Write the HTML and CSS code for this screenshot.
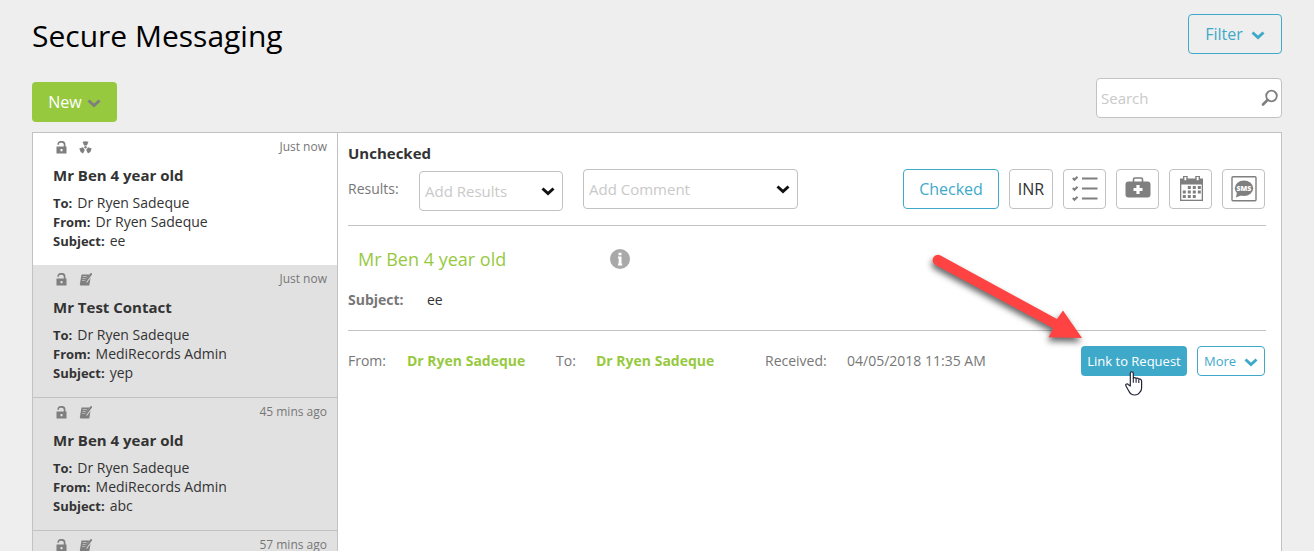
FILE: index.html
```html
<!DOCTYPE html>
<html lang="en">
<head>
<meta charset="utf-8">
<title>Secure Messaging</title>
<link rel="stylesheet" href="styles.css">
</head>
<body>
<svg class="sprite" aria-hidden="true">
  <symbol id="chevron" viewBox="0 0 14 9"><path d="M1.500 1.500 7 6.500 12.500 1.500" fill="none" stroke="currentColor" stroke-width="3"/></symbol>
  <symbol id="unlock" viewBox="0 0 13 13"><path d="M3.200 3.800V3.500q0-2.700 3.200-2.700t3.200 2.700V6" fill="none" stroke="currentColor" stroke-width="1.700"/><path fill="currentColor" fill-rule="evenodd" d="M1.500 5.500h10v7h-10zM5.500 8v2.200h2V8z"/></symbol>
  <symbol id="radiology" viewBox="0 0 13 13"><g fill="currentColor"><circle cx="6.500" cy="6.300" r="1.200"/><path d="M3.500.8Q6.500-.2 9.500.8L7.900 4.600H5.100zM.3 7.500 4 6.200 5.800 9 4 12.500Q.8 11 .3 7.500zM12.700 7.500 9 6.200 7.200 9 9 12.500q3.200-1.500 3.700-5z"/></g></symbol>
  <symbol id="note" viewBox="0 0 13 13"><path d="M2.500 1.500H12L10.300 12.500H1.500L.8 11.500z" fill="currentColor"/><path d="M3.800 3.500h4M3.500 5.500h3M3.200 7.500h2.500" stroke="var(--surface)" stroke-width=".6"/><path d="M12.800 1 6.800 9" stroke="var(--surface)" stroke-width="2.800"/><path d="M12.700.3 7.200 7.800 6 9.500" stroke="currentColor" stroke-width="1.900"/></symbol>
</svg>

<header class="page-header">
  <h1 class="page-title">Secure Messaging</h1>
  <button class="btn btn-outline btn-filter" type="button">Filter <svg class="chevron"><use href="#chevron"/></svg></button>
</header>
<div class="page-tools">
  <button class="btn btn-new" type="button">New <svg class="chevron"><use href="#chevron"/></svg></button>
  <div class="search">
    <input class="search-input" type="search" placeholder="Search" aria-label="Search">
    <svg class="search-icon" viewBox="0 0 18 18"><circle cx="10.500" cy="7" r="5.300" fill="none" stroke="#7f7f7f" stroke-width="1.800"/><path d="M6.500 11 2 15.500" stroke="#7f7f7f" stroke-width="2.600" stroke-linecap="round"/></svg>
  </div>
</div>

<main class="panel">
  <section class="list" aria-label="Messages">
    <article class="message message-active">
      <div class="message-top"><svg class="mark"><use href="#unlock"/></svg><svg class="mark"><use href="#radiology"/></svg><time class="age">Just now</time></div>
      <h2 class="message-name">Mr Ben 4 year old</h2>
      <p class="message-line"><b>To:</b> Dr Ryen Sadeque</p>
      <p class="message-line"><b>From:</b> Dr Ryen Sadeque</p>
      <p class="message-line"><b>Subject:</b> ee</p>
    </article>
    <article class="message">
      <div class="message-top"><svg class="mark"><use href="#unlock"/></svg><svg class="mark"><use href="#note"/></svg><time class="age">Just now</time></div>
      <h2 class="message-name">Mr Test Contact</h2>
      <p class="message-line"><b>To:</b> Dr Ryen Sadeque</p>
      <p class="message-line"><b>From:</b> MediRecords Admin</p>
      <p class="message-line"><b>Subject:</b> yep</p>
    </article>
    <article class="message">
      <div class="message-top"><svg class="mark"><use href="#unlock"/></svg><svg class="mark"><use href="#note"/></svg><time class="age">45 mins ago</time></div>
      <h2 class="message-name">Mr Ben 4 year old</h2>
      <p class="message-line"><b>To:</b> Dr Ryen Sadeque</p>
      <p class="message-line"><b>From:</b> MediRecords Admin</p>
      <p class="message-line"><b>Subject:</b> abc</p>
    </article>
    <article class="message">
      <div class="message-top"><svg class="mark"><use href="#unlock"/></svg><svg class="mark"><use href="#note"/></svg><time class="age">57 mins ago</time></div>
    </article>
  </section>

  <section class="detail" aria-label="Message">
    <h2 class="status">Unchecked</h2>
    <div class="toolbar">
      <label class="toolbar-label" for="results">Results:</label>
      <div class="select select-results"><select id="results"><option>Add Results</option></select><svg class="chevron"><use href="#chevron"/></svg></div>
      <div class="select select-comment"><select aria-label="Comment"><option>Add Comment</option></select><svg class="chevron"><use href="#chevron"/></svg></div>
      <div class="toolbar-actions">
        <button class="btn btn-outline btn-checked" type="button">Checked</button>
        <button class="tool tool-text" type="button">INR</button>
        <button class="tool" type="button" aria-label="Tasks"><svg viewBox="0 0 26 26"><g fill="none" stroke="#7f7f7f"><path stroke-width="2" d="M10 2.500h15.500M10 12.500h15.500M10 22.500h15.500"/><path stroke-width="2" d="M.8 2l1.700 1.800L5.500.8M.8 12l1.700 1.800 3-3M.8 22l1.700 1.800 3-3"/></g></svg></button>
        <button class="tool" type="button" aria-label="Clinical"><svg viewBox="0 0 26 26"><path d="M8.500 6V3.500q0-1.500 1.500-1.500h6q1.500 0 1.500 1.500V6" fill="none" stroke="#7f7f7f" stroke-width="1.600"/><rect x=".5" y="5.500" width="25" height="16" rx="3" fill="#7f7f7f"/><path d="M13 9v9M8.500 13.500h9" stroke="#fff" stroke-width="3.200"/></svg></button>
        <button class="tool" type="button" aria-label="Calendar"><svg viewBox="0 0 26 26"><path fill="#7f7f7f" d="M2 2.500h23V25H2z"/><path fill="#fff" d="M3.300 8.500h20.400v15.200H3.300z"/><path d="M5.700 5V.2h3.300V5zM18 5V.2h3.300V5z" fill="#fff" stroke="#7f7f7f" stroke-width="1.400"/><path d="M9.800 11.500h13M4.800 16h18M4.800 20.500h13" stroke="#7f7f7f" stroke-width="3" stroke-dasharray="3 2"/></svg></button>
        <button class="tool" type="button" aria-label="SMS"><svg viewBox="0 0 26 26"><rect x="1" y=".7" width="24" height="24" rx="1" fill="none" stroke="#7f7f7f" stroke-width="1.400"/><ellipse cx="13" cy="12.300" rx="9.200" ry="7.800" fill="#7f7f7f"/><path d="M6 16 5 21.500l6-2.500z" fill="#7f7f7f"/><text class="sms" x="13" y="15" text-anchor="middle">SMS</text></svg></button>
      </div>
    </div>

    <div class="subject-block">
      <div class="patient">
        <a class="patient-name" href="#">Mr Ben 4 year old</a>
        <svg class="info" viewBox="0 0 20 20" role="img" aria-label="Information"><circle cx="10" cy="10" r="10" fill="#a9a9a9"/><path d="M8.500 3.800h3v2.400h-3zM8 7.500h3.500v7h.7v2H8v-2h.7v-5H8z" fill="#fff"/></svg>
      </div>
      <div class="subject"><b>Subject:</b><span>ee</span></div>
    </div>

    <div class="meta">
      <span>From:</span><a class="person" href="#">Dr Ryen Sadeque</a>
      <span>To:</span><a class="person" href="#">Dr Ryen Sadeque</a>
      <span>Received:</span><time>04/05/2018 11:35 AM</time>
      <div class="meta-actions">
        <div class="link-wrap">
          <button class="btn btn-small btn-link" type="button">Link to Request</button>
          <svg class="arrow" viewBox="0 0 180 110" aria-hidden="true"><path d="M20.500 10.500 137 74l6-8.500 19 27.500-33.500-.8 4.700-9L15.500 20a5.300 5.300 0 0 1 5-9.500z" fill="#ff4343"/></svg>
          <svg class="pointer" viewBox="0 0 18 25" aria-hidden="true"><path d="M5.300 15V2.300q0-1.500 1.500-1.500t1.500 1.500V7q1.300-1 2.800.3 1.500-.6 2.500.6 3-.1 3 2.300V17q0 3-2 4.500-1.500 2.500-5 2.500-4 0-5.800-4L1 15q-.8-1.500.5-2 1-.4 2 .7z" fill="#fff" stroke="#222436" stroke-width="1.200" stroke-linejoin="round"/><path d="M8.300 7v4.800M11.100 7.500v4.300M13.800 8.500V12" stroke="#222436" stroke-width="1.100"/></svg>
        </div>
        <button class="btn btn-small btn-outline btn-more" type="button">More <svg class="chevron"><use href="#chevron"/></svg></button>
      </div>
    </div>
  </section>
</main>
</body>
</html>
```
FILE: styles.css
```css
* { box-sizing: border-box; }

body {
  --surface: #e1e1e1;
  --line: #c2c2c2;
  --blue: #3fa9c9;
  --green: #97c93f;
  display: flex;
  flex-direction: column;
  height: 100vh;
  margin: 0;
  padding: 14px 32px 0;
  overflow: hidden;
  background: #eee;
  color: #333;
  font: 14px/20px "Open Sans", "Noto Sans", sans-serif;
}

h1, h2, p { margin: 0; }
a { text-decoration: none; }
button, input, select { font: inherit; }
.sprite { position: absolute; width: 0; height: 0; }

.page-header, .page-tools { display: flex; justify-content: space-between; }
.page-header { height: 64px; align-items: flex-start; }
.page-title { color: #000; font-size: 30px; line-height: 44px; font-weight: 400; }
.page-tools { height: 54px; }

.btn {
  display: flex;
  align-items: center;
  justify-content: center;
  height: 40px;
  padding: 0 15px;
  border: 1px solid transparent;
  border-radius: 4px;
  background: none;
  font-size: 16px;
}
.btn-outline { border-color: var(--blue); color: var(--blue); }
.btn-outline .chevron { margin-left: 8px; }
.btn-filter { width: 94px; }
.btn-new { width: 85px; margin-top: 4px; background: var(--green); color: #fff; font-weight: 500; }
.btn-new .chevron { margin-left: 5px; color: #7f7f7f; }
.chevron { flex: none; width: 14px; height: 9px; margin-top: 3px; }

.search { position: relative; width: 186px; height: 40px; }
.search-input {
  width: 100%;
  height: 40px;
  padding: 0 30px 0 4px;
  border: 1px solid var(--line);
  border-radius: 4px;
  background: #fff;
  font-size: 15px;
}
.search-input::placeholder { color: #c9c9c9; }
.search-icon { position: absolute; top: 11px; right: 3px; width: 18px; height: 18px; }

.panel {
  display: flex;
  flex: 1;
  min-height: 0;
  border: 1px solid var(--line);
  border-bottom: 0;
  background: #fff;
}

.list { flex: none; width: 305px; overflow: hidden; border-right: 1px solid var(--line); }
.message {
  height: 133px;
  padding: 4px 10px 0 20px;
  border-bottom: 1px solid var(--line);
  background: var(--surface);
}
.message-active { --surface: #fff; height: 132px; border-bottom: 0; }
.message-top { display: flex; align-items: center; height: 20px; padding-left: 2px; }
.mark { width: 13px; height: 13px; margin-right: 11px; color: #7f7f7f; }
.age { margin-left: auto; color: #777; font-size: 12px; }
.message-name { margin: 8px 0; font-size: 15px; line-height: 20px; font-weight: 700; }
.message-line { display: flex; align-items: center; gap: 5px; height: 19px; }
.message-line b { font-size: 13px; }

.detail { flex: 1; padding: 10px 15px 0 10px; }
.status { margin-bottom: 6px; font-size: 15px; line-height: 20px; }
.toolbar {
  display: flex;
  align-items: flex-start;
  height: 57px;
  border-bottom: 1px solid var(--line);
}
.toolbar-label { width: 71px; color: #777; line-height: 40px; }
.select { position: relative; margin-right: 20px; }
.select select {
  width: 100%;
  height: 40px;
  padding: 0 30px 0 5px;
  border: 1px solid var(--line);
  border-radius: 4px;
  appearance: none;
  background: #fff;
  color: #c9c9c9;
  font-size: 15px;
}
.select .chevron { position: absolute; top: 13px; right: 8px; color: #111; pointer-events: none; }
.select-results { width: 144px; margin-top: 2px; }
.select-comment { width: 215px; }
.toolbar-actions { display: flex; gap: 10px; margin-left: auto; padding-right: 1px; }
.btn-checked { width: 96px; }
.tool {
  display: flex;
  align-items: center;
  justify-content: center;
  width: 43px;
  height: 40px;
  padding: 0;
  border: 1px solid var(--line);
  border-radius: 4px;
  background: #fff;
  color: #333;
}
.tool svg { width: 26px; height: 26px; }
.tool-text { width: 44px; font-size: 16px; }
.sms { fill: #fff; font: 800 7px "Open Sans", sans-serif; }

.subject-block { height: 105px; padding-top: 20px; border-bottom: 1px solid var(--line); }
.patient { display: flex; align-items: center; height: 26px; padding-left: 10px; }
.patient-name { width: 252px; color: var(--green); font-size: 18px; }
.info { width: 20px; height: 20px; }
.subject { display: flex; margin-top: 18px; }
.subject b { width: 79px; color: #777; }

.meta {
  display: grid;
  grid-template-columns: 59px 149px 40px 169px 82px auto 1fr;
  align-items: center;
  height: 60px;
  color: #777;
}
.person { color: var(--green); font-weight: 700; }
.meta-actions { display: flex; justify-content: flex-end; gap: 10px; padding-right: 1px; }
.btn-small { height: 30px; padding: 0 6px; font-size: 13px; }
.btn-link { width: 106px; background: var(--blue); color: #fff; white-space: nowrap; }
.btn-more { width: 68px; }
.link-wrap { position: relative; }
.arrow {
  position: absolute;
  top: -101px;
  right: 87px;
  width: 180px;
  height: 110px;
  filter: drop-shadow(-1px 4px 3px rgba(0, 0, 0, .6));
  pointer-events: none;
}
.pointer { position: absolute; top: 25px; left: 44px; width: 18px; height: 25px; pointer-events: none; }
```
